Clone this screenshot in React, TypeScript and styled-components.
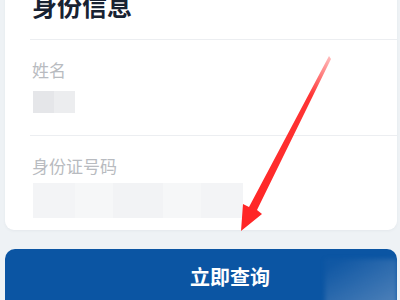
import styled, { createGlobalStyle } from 'styled-components';

const GlobalStyle = createGlobalStyle`
  html, body {
    margin: 0;
    padding: 0;
    width: 400px;
    height: 300px;
    overflow: hidden;
    background: #eef2f5;
    font-family: "Noto Sans CJK SC", "Noto Sans", sans-serif;
  }
`;

const Page = styled.div`
  position: relative;
  width: 400px;
  height: 300px;
  box-sizing: border-box;
  padding: 0 3px 0 5px;
  display: flex;
  flex-direction: column;
  overflow: hidden;
`;

const Card = styled.div`
  margin-top: -20px;
  padding: 10px 0 12px 27px;
  background: #ffffff;
  border-radius: 9px;
  box-shadow: 0 1px 3px rgba(30, 50, 80, 0.05);
  display: flex;
  flex-direction: column;
`;

const Title = styled.h2`
  margin: 0;
  font-size: 25px;
  line-height: 30px;
  font-weight: 700;
  color: #182232;
`;

const Divider = styled.div<{ $top: number }>`
  height: 1px;
  margin-top: ${(p) => p.$top}px;
  margin-left: -2px;
  background: #eceef1;
`;

const Label = styled.div<{ $top: number }>`
  margin-top: ${(p) => p.$top}px;
  font-size: 17px;
  line-height: 24px;
  color: #b8bbc0;
`;

const Masked = styled.div<{ $w: number; $h: number; $top: number; $shade: string }>`
  margin-top: ${(p) => p.$top}px;
  margin-left: 1px;
  width: ${(p) => p.$w}px;
  height: ${(p) => p.$h}px;
  background: ${(p) => p.$shade};
  filter: blur(0.6px);
`;

const QueryButton = styled.button`
  position: relative;
  margin-top: 19px;
  height: 62px;
  flex-shrink: 0;
  border: none;
  border-radius: 10px;
  background: #0b55a3;
  color: #ffffff;
  font-family: inherit;
  font-size: 20px;
  font-weight: 700;
  line-height: 26px;
  padding: 15px 0 0 58px;
  display: flex;
  justify-content: center;
  align-items: flex-start;
  overflow: hidden;

  &::after {
    content: '';
    position: absolute;
    top: 10px;
    right: 0;
    width: 72px;
    bottom: 0;
    background: linear-gradient(150deg, rgba(40, 100, 170, 0.2) 10%, rgba(110, 150, 195, 0.75) 100%);
    filter: blur(2px);
  }
`;

const ArrowLayer = styled.svg`
  position: absolute;
  left: 0;
  top: 0;
  width: 400px;
  height: 300px;
  pointer-events: none;
`;

export default function App() {
  return (
    <>
      <GlobalStyle />
      <Page>
        <Card>
          <Title>身份信息</Title>
          <Divider $top={19} />
          <Label $top={18}>姓名</Label>
          <Masked
            $top={9}
            $w={42}
            $h={22}
            $shade="linear-gradient(90deg, #e5e6e9 0 50%, #ecedef 50% 100%)"
          />
          <Divider $top={22} />
          <Label $top={18}>身份证号码</Label>
          <Masked
            $top={5}
            $w={210}
            $h={35}
            $shade="linear-gradient(90deg, #f3f4f6 0 20%, #f6f7f8 20% 38%, #f2f3f5 38% 62%, #f6f7f8 62% 80%, #f3f4f6 80% 100%)"
          />
        </Card>
        <QueryButton>立即查询</QueryButton>
        <ArrowLayer viewBox="0 0 400 300">
          <defs>
            <linearGradient id="arrowFade" x1="329" y1="56" x2="250" y2="210" gradientUnits="userSpaceOnUse">
              <stop offset="0" stopColor="#ff3b3b" stopOpacity="0.35" />
              <stop offset="0.25" stopColor="#ff2a2a" stopOpacity="0.95" />
              <stop offset="1" stopColor="#ff2626" />
            </linearGradient>
          </defs>
          <polygon
            points="329,56 331,59 257,210 262,214 241,231 243,204 249,207"
            fill="url(#arrowFade)"
          />
        </ArrowLayer>
      </Page>
    </>
  );
}
